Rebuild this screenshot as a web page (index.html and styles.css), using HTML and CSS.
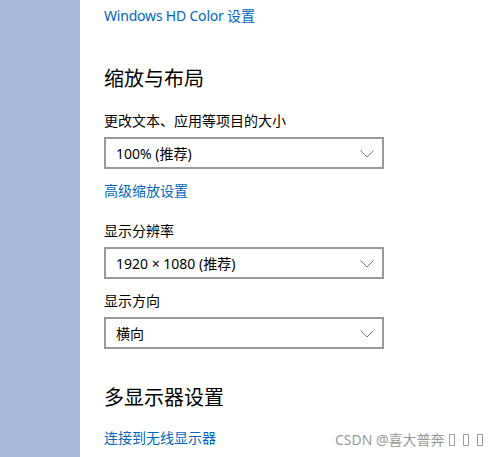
FILE: index.html
```html
<!DOCTYPE html>
<html lang="zh-CN">
<head>
<meta charset="utf-8">
<link rel="stylesheet" href="styles.css">
</head>
<body>
<div class="page">
  <aside class="sidebar"></aside>
  <main class="main">
    <a class="link link-top">Windows HD Color 设置</a>
    <h2 class="heading heading-scale">缩放与布局</h2>
    <div class="label label-first">更改文本、应用等项目的大小</div>
    <div class="select"><span>100% (推荐)</span><svg class="chev" width="14" height="8" viewBox="0 0 14 8"><polyline points="0.5,0.5 7,7 13.5,0.5" fill="none" stroke="#7a7a7a" stroke-width="1"/></svg></div>
    <a class="link link-adv">高级缩放设置</a>
    <div class="label label-res">显示分辨率</div>
    <div class="select"><span>1920 × 1080 (推荐)</span><svg class="chev" width="14" height="8" viewBox="0 0 14 8"><polyline points="0.5,0.5 7,7 13.5,0.5" fill="none" stroke="#7a7a7a" stroke-width="1"/></svg></div>
    <div class="label label-dir">显示方向</div>
    <div class="select"><span>横向</span><svg class="chev" width="14" height="8" viewBox="0 0 14 8"><polyline points="0.5,0.5 7,7 13.5,0.5" fill="none" stroke="#7a7a7a" stroke-width="1"/></svg></div>
    <h2 class="heading heading-multi">多显示器设置</h2>
    <a class="link link-wireless">连接到无线显示器</a>
  </main>
</div>
<div class="watermark"><span>CSDN @喜大普奔</span><i class="box first"></i><i class="box"></i><i class="box"></i></div>
</body>
</html>
```

FILE: styles.css
```css
html, body {
  margin: 0;
  padding: 0;
  background: #fff;
}
body {
  font-family: "Noto Sans", "Noto Sans CJK SC", sans-serif;
  font-size: 14px;
  color: #000;
  width: 497px;
  height: 457px;
  overflow: hidden;
  position: relative;
}
.page {
  display: flex;
  height: 457px;
}
.sidebar {
  width: 80px;
  flex: none;
  background: #aab9d9;
}
.main {
  flex: 1;
  display: flex;
  flex-direction: column;
  align-items: flex-start;
  padding: 6px 0 0 24px;
}
.link {
  color: #0067c0;
  line-height: 20px;
  font-size: 14px;
}
.link-top { letter-spacing: -0.2px; }
.heading {
  margin: 0;
  font-weight: normal;
  font-size: 20px;
  line-height: 28px;
}
.heading-scale { margin-top: 39px; }
.label { line-height: 20px; }
.label-first { margin-top: 18px; }
.select {
  margin-top: 6px;
  box-sizing: border-box;
  width: 280px;
  height: 32px;
  border: 2px solid #999;
  display: flex;
  align-items: center;
  justify-content: space-between;
  padding: 0 8px 0 10px;
}
.chev { margin-top: 1px; }
.link-adv { margin-top: 12px; }
.label-res { margin-top: 20px; }
.label-dir { margin-top: 12px; }
.heading-multi { margin-top: 35px; }
.link-wireless { margin-top: 16px; }
.watermark {
  position: absolute;
  left: 335px;
  top: 430px;
  display: flex;
  align-items: center;
  font-size: 14px;
  line-height: 20px;
  color: #9a9a9a;
}
.box {
  display: inline-block;
  width: 4px;
  height: 10px;
  border: 1px solid #a0a0a0;
  margin-left: 8px;
}
.box.first { margin-left: 4px; }
```
